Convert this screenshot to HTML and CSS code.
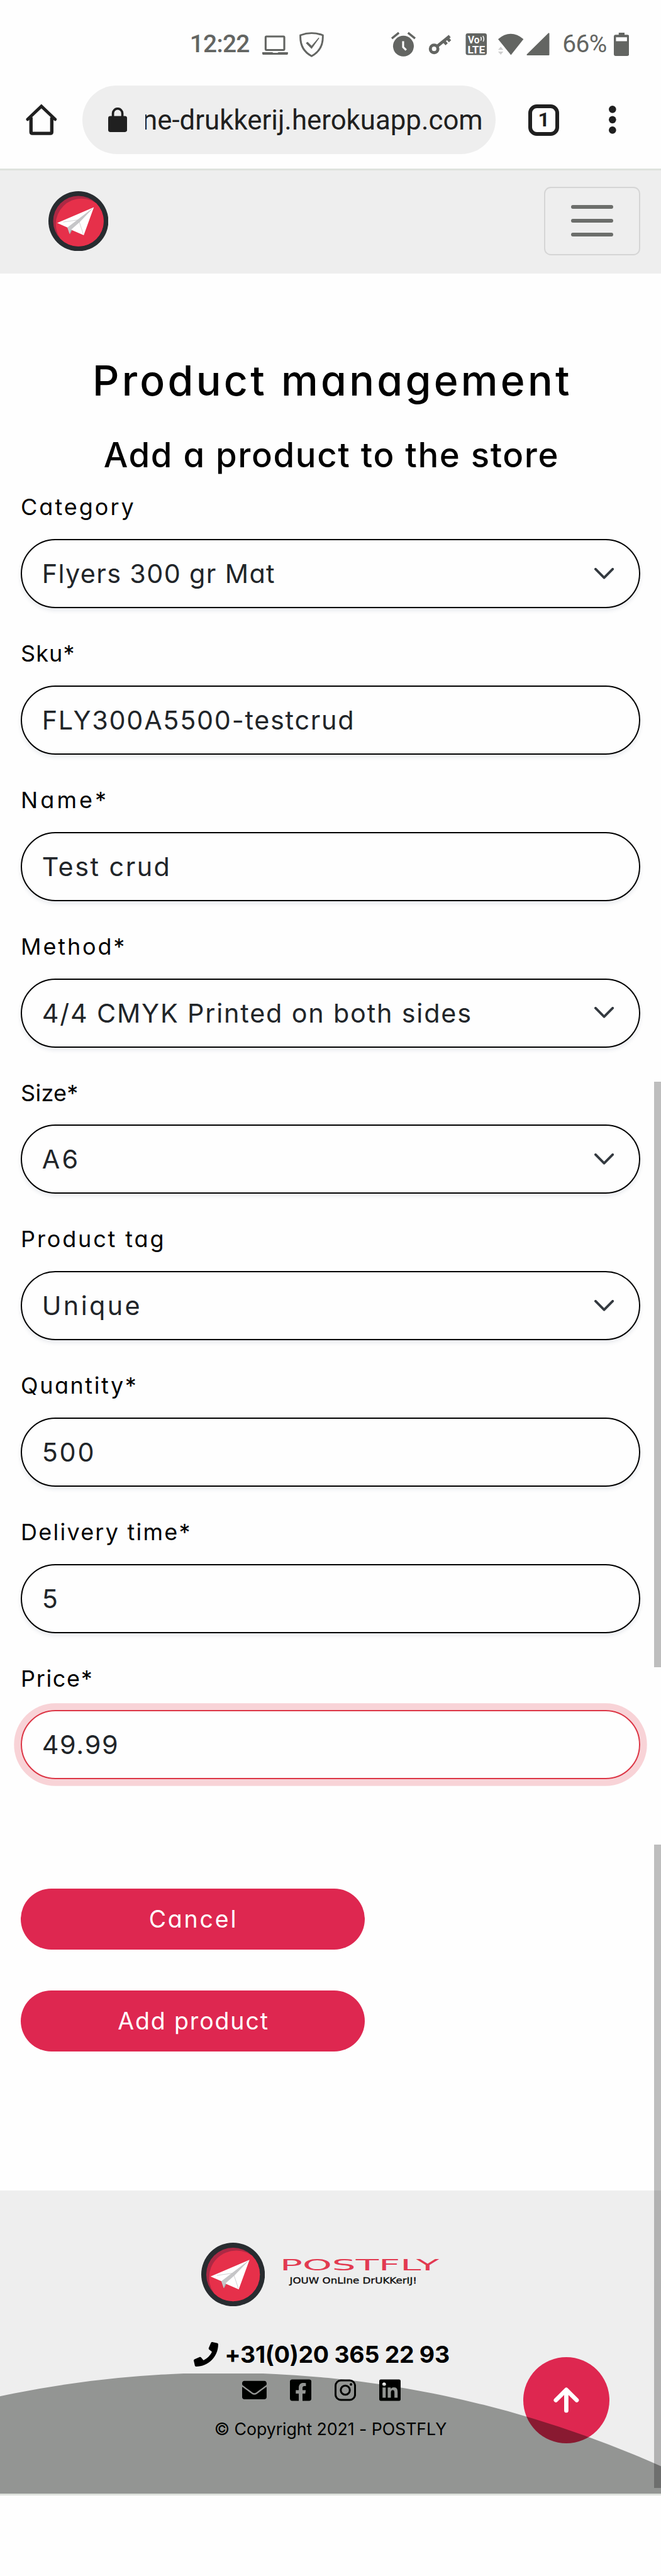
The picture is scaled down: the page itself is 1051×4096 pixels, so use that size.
FILE: index.html
```html
<!DOCTYPE html>
<html lang="en">
<head>
<meta charset="utf-8">
<title>Product management</title>
<link rel="stylesheet" href="styles.css">
</head>
<body>
<div class="screen">
  <div class="status">
    <span class="clock">12:22</span>
    <svg class="i-laptop" width="42" height="44" viewBox="0 0 42 44"><rect x="5.500" y="9.300" width="30.500" height="22" rx="1.500" fill="none" stroke="#636562" stroke-width="3.200"/><path d="M0 35h16.500l1.500 1h7l1.500-1H42v2.500q0 1.500-1.500 1.500h-39Q0 39 0 37.500z"/></svg>
    <svg class="i-shield" width="40" height="44" viewBox="0 0 40 44"><path d="M20 3.700Q29 3.700 38.300 7.200Q39.500 31 20 41.300Q.5 31 1.700 7.200Q11 3.700 20 3.700z" fill="none" stroke="#636562" stroke-width="3"/><path d="M10.500 20l3-2 6.500 6.500L31.500 11l1 1L20 29.500z"/></svg>
    <svg class="i-alarm" width="40" height="44" viewBox="0 0 40 44"><circle cx="20" cy="25" r="17"/><path d="M1 12.500L12.500 3.200M39 12.500L27.500 3.200" stroke="#636562" stroke-width="3.500"/><path d="M19.500 17v9.500l5 5" fill="none" stroke="#fefefe" stroke-width="3.200"/></svg>
    <svg class="i-key" width="40" height="44" viewBox="0 0 40 44"><circle cx="9.500" cy="29.500" r="6.200" fill="none" stroke="#636562" stroke-width="5"/><path d="M13.500 26L35 8.500M31 12l4.500 5M25.500 17l4.500 5" stroke="#636562" stroke-width="5" fill="none"/></svg>
    <svg class="i-volte" width="36" height="44" viewBox="0 0 36 44"><rect x=".5" y="4" width="34.500" height="35.500" rx="3.500"/><text x="4" y="20.500" class="volte" textLength="19" lengthAdjust="spacingAndGlyphs">Vo</text><text x="3.500" y="36.500" class="volte" textLength="28.500" lengthAdjust="spacingAndGlyphs">LTE</text><path d="M25 10q2 3 0 6M28.500 8.500q3 4.500 .5 9" fill="none" stroke="#fefefe" stroke-width="1.500"/></svg>
    <svg class="i-wifi" width="43" height="44" viewBox="0 0 43 44"><path d="M1 13.500Q21.500-3.500 42.500 13.500L22 39.500z"/><path d="M1 31l4.300-5L9.600 31zM1 34h8.600l-4.300 5z" fill="#cfcfcf"/></svg>
    <svg class="i-signal" width="39" height="44" viewBox="0 0 39 44"><path d="M1.500 39L36.500 4.500V39z" stroke="#636562" stroke-width="2" stroke-linejoin="round"/></svg>
    <span class="level">66%</span>
    <svg class="i-battery" width="25" height="44" viewBox="0 0 25 44"><path d="M8 3h9.500v3.500H22q3 0 3 3V38q0 3-3 3H3q-3 0-3-3V9.500q0-3 3-3h5zM3.500 10.500v6.500h18v-6.500z" fill-rule="evenodd"/></svg>
  </div>
  <div class="toolbar">
    <svg class="i-home" width="52" height="52" viewBox="0 0 52 52" fill="none" stroke="#202020"><path d="M8.500 22v24q0 2.500 2.500 2.500h29q2.500 0 2.500-2.500V22" stroke-width="5.500"/><path d="M3 25.500L25.500 4 48 25.500" stroke-width="5" stroke-linecap="round"/></svg>
    <div class="omnibox">
      <svg class="i-lock" width="31" height="40" viewBox="0 0 31 40"><rect y="14" width="31" height="26" rx="3.500" fill="#202020"/><path d="M7.800 15V9.500a7.700 7.700 0 0 1 15.400 0V15" fill="none" stroke="#202020" stroke-width="3.800"/></svg>
      <div class="url"><span>ne-drukkerij.herokuapp.com</span></div>
    </div>
    <div class="tabs">1</div>
    <svg class="i-more" width="12" height="48" viewBox="0 0 12 48"><circle cx="6" cy="7" r="6"/><circle cx="6" cy="24" r="6"/><circle cx="6" cy="41" r="6"/></svg>
  </div>
  <nav class="navbar">
    <svg class="mark" viewBox="0 0 98 98"><defs><clipPath id="disc"><circle cx="49" cy="49" r="41.300"/></clipPath><g id="plane"><circle cx="49" cy="49" r="49" fill="#282c30"/><circle cx="49" cy="49" r="41.300" fill="#ac2944"/><circle cx="54" cy="54" r="42" fill="#e6304a" clip-path="url(#disc)"/><path d="M31 59.300l4 11L39 63z" fill="#a3a3a5"/><path d="M74.300 26.300L14.300 52 31 59.300 38.700 63.700 57.700 72z" fill="#fff"/><path d="M74.300 26.300L47 47 31 59.300 34.500 70 37 63 51 50.500z" fill="#c6c6c8"/><path d="M24 50.500l24-3.500M50.500 50.500L57 70" fill="none" stroke="#c6c6c8" stroke-width=".8"/></g></defs><use href="#plane"/></svg>
    <div class="toggler"><i></i><i></i><i></i></div>
  </nav>
  <main class="content">
    <h1>Product management</h1>
    <h2>Add a product to the store</h2>
    <form class="fields">
      <div class="field f-category"><label>Category</label><div class="control"><span>Flyers 300 gr Mat</span><svg class="chev" viewBox="0 0 32 19"><path d="M2 2l14 14L30 2"/></svg></div></div>
      <div class="field f-sku"><label>Sku*</label><div class="control"><span>FLY300A5500-testcrud</span></div></div>
      <div class="field f-name"><label>Name*</label><div class="control"><span>Test crud</span></div></div>
      <div class="field f-method"><label>Method*</label><div class="control"><span>4/4 CMYK Printed on both sides</span><svg class="chev" viewBox="0 0 32 19"><path d="M2 2l14 14L30 2"/></svg></div></div>
      <div class="field f-size"><label>Size*</label><div class="control"><span>A6</span><svg class="chev" viewBox="0 0 32 19"><path d="M2 2l14 14L30 2"/></svg></div></div>
      <div class="field f-tag"><label>Product tag</label><div class="control"><span>Unique</span><svg class="chev" viewBox="0 0 32 19"><path d="M2 2l14 14L30 2"/></svg></div></div>
      <div class="field f-quantity"><label>Quantity*</label><div class="control"><span>500</span></div></div>
      <div class="field f-delivery"><label>Delivery time*</label><div class="control"><span>5</span></div></div>
      <div class="field f-price"><label>Price*</label><div class="control focused"><span>49.99</span></div></div>
    </form>
    <div class="actions">
      <div class="btn cancel">Cancel</div>
      <div class="btn add">Add product</div>
    </div>
  </main>
  <footer class="footer">
    <div class="brand">
      <svg class="mark" viewBox="0 0 98 98"><use href="#plane"/></svg>
      <svg class="wordmark" width="262" height="104" viewBox="0 0 262 104"><text class="name" x="-1" y="45" textLength="260" lengthAdjust="spacingAndGlyphs">POSTFLY</text><text class="tagline" x="15" y="67" textLength="208" lengthAdjust="spacingAndGlyphs">JOUW OnLIne DrUKKerIJ!</text></svg>
    </div>
    <div class="phone"><svg width="40" height="40" viewBox="0 0 512 512"><path d="M493.400 24.600l-104-24c-11.300-2.600-22.900 3.300-27.500 13.900l-48 112c-4.200 9.800-1.400 21.300 6.900 28l60.600 49.600c-36 76.700-98.900 140.500-177.200 177.200l-49.600-60.600c-6.800-8.300-18.200-11.100-28-6.900l-112 48C3.900 366.500-2 378.100.6 389.400l24 104C27.100 504.200 36.700 512 48 512c256.100 0 464-207.500 464-464 0-11.200-7.700-20.900-18.600-23.400z"/></svg><span>+31(0)20 365 22 93</span></div>
    <div class="social">
      <svg width="40" height="40" viewBox="0 0 512 512"><path d="M502.300 190.800c3.900-3.100 9.700-.2 9.700 4.700V400c0 26.500-21.500 48-48 48H48c-26.500 0-48-21.500-48-48V195.600c0-5 5.700-7.800 9.700-4.700 22.400 17.400 52.100 39.500 154.100 113.600 21.100 15.400 56.700 47.800 92.200 47.600 35.700.3 72-32.800 92.300-47.600 102-74.100 131.600-96.300 154-113.700zM256 320c23.200.4 56.600-29.200 73.400-41.400 132.700-96.300 142.800-104.700 173.400-128.700 5.800-4.500 9.200-11.500 9.200-18.900v-19c0-26.500-21.500-48-48-48H48c-26.500 0-48 21.500-48 48v19c0 7.400 3.400 14.300 9.200 18.900 30.600 23.900 40.700 32.400 173.400 128.700 16.800 12.200 50.200 41.800 73.400 41.400z"/></svg>
      <svg width="35" height="40" viewBox="0 0 448 512"><path d="M400 32H48A48 48 0 0 0 0 80v352a48 48 0 0 0 48 48h137.250V327.690h-63V256h63v-54.640c0-62.150 37-96.480 93.670-96.480 27.140 0 55.520 4.840 55.520 4.840v61h-31.270c-30.810 0-40.420 19.120-40.420 38.730V256h68.780l-11 71.690h-57.780V480H400a48 48 0 0 0 48-48V80a48 48 0 0 0-48-48z"/></svg>
      <svg width="35" height="40" viewBox="0 0 448 512"><rect x="20" y="52" width="408" height="408" rx="112" fill="none" stroke="#000" stroke-width="40"/><circle cx="224" cy="256" r="95" fill="none" stroke="#000" stroke-width="40"/><circle cx="343" cy="137" r="27"/></svg>
      <svg width="35" height="40" viewBox="0 0 448 512"><path d="M416 32H31.900C14.300 32 0 46.500 0 64.300v383.400C0 465.500 14.300 480 31.900 480H416c17.600 0 32-14.500 32-32.300V64.300c0-17.800-14.400-32.300-32-32.300zM135.400 416H69V202.200h66.500V416zm-33.200-243c-21.300 0-38.500-17.300-38.500-38.500S80.900 96 102.200 96c21.200 0 38.500 17.300 38.500 38.500 0 21.300-17.200 38.500-38.500 38.500zm282.100 243h-66.400V312c0-24.800-.5-56.700-34.500-56.700-34.600 0-39.900 27-39.900 54.900V416h-66.400V202.200h63.700v29.200h.9c8.900-16.800 30.600-34.500 62.900-34.500 67.200 0 79.700 44.300 79.700 101.900V416z"/></svg>
    </div>
    <p class="copyright">© Copyright 2021 - POSTFLY</p>
    <div class="fab"><svg width="42" height="42" viewBox="0 0 42 42"><path d="M21 38V5M4 21L21 4l17 17" fill="none" stroke="#fff" stroke-width="7" stroke-linecap="round" stroke-linejoin="round"/></svg></div>
    <svg class="ripple" width="1080" height="196" viewBox="0 0 1080 196"><circle cx="365" cy="1748.800" r="1750" fill="rgba(0,5,0,.38)"/></svg>
  </footer>
  <div class="systembar"></div>
  <div class="scroll scroll-upper"></div>
  <div class="scroll scroll-lower"></div>
</div>
</body>
</html>
```
FILE: styles.css
```css
* { box-sizing: border-box; }
body { margin: 0; background: #fefefe; }
.screen {
  position: relative; width: 1080px; height: 4209px; overflow: hidden;
  zoom: 0.97315; background: #fefefe; color: #000;
  font-family: Inter, "Open Sans", sans-serif; font-feature-settings: "cv11";
}
svg { display: block; flex: none; }
h1, h2, p { margin: 0; font-weight: 500; }

/* Android status bar */
.status { display: flex; height: 140px; padding: 50px 0 0 310px; fill: #636562; color: #636562; font: 500 40px/44px Roboto, sans-serif; }
.clock { width: 119px; letter-spacing: -.78px; }
.i-shield { margin-left: 18px; }
.i-alarm { margin-left: 110px; }
.i-key { margin-left: 21px; }
.i-volte { margin-left: 20px; }
.i-wifi { margin-left: 17px; }
.i-signal { margin-left: 4px; }
.level { width: 84px; margin-left: 20px; font-weight: 400; letter-spacing: -.57px; }
.volte { font: 700 17px Roboto, sans-serif; letter-spacing: 0; fill: #fefefe; }

/* Browser toolbar */
.toolbar { display: flex; align-items: center; height: 138px; padding: 0 0 23px 42px; border-bottom: 3.100px solid #dee2dd; }
.omnibox { display: flex; align-items: center; width: 675px; height: 112px; margin-left: 41px; padding-left: 42px; border-radius: 56px; background: #eee; }
.url { display: flex; justify-content: flex-end; width: 552px; margin-left: 29px; overflow: hidden; color: #202020; font: 400 45px/60px Roboto, sans-serif; white-space: nowrap; }
.tabs { display: flex; align-items: center; justify-content: center; width: 51px; height: 51px; margin-left: 53px; border: 6.200px solid #202020; border-radius: 14px; color: #202020; font: 700 33px/36px Roboto, sans-serif; }
.i-more { margin-left: 81px; fill: #202020; }

/* Site navbar */
.navbar { display: flex; align-items: flex-start; justify-content: space-between; height: 169px; padding: 27px 34px 0 79px; background: #eee; }
.navbar .mark { width: 98px; height: 98px; margin-top: 7px; }
.toggler { display: flex; flex-direction: column; align-items: center; justify-content: center; gap: 16.500px; width: 157px; height: 112px; border: 2.200px solid #d5d5d5; border-radius: 11px; }
.toggler i { width: 68px; height: 6px; border-radius: 3px; background: #6c6e6b; }

/* Product form */
.content { height: 3132.500px; padding: 136px 34px 0; }
h1 { padding-left: 6px; font-size: 68px; line-height: 80px; letter-spacing: 4.400px; text-align: center; white-space: nowrap; }
h2 { margin-top: 47px; padding-left: 3px; font-size: 56px; line-height: 66px; letter-spacing: 1.700px; text-align: center; white-space: nowrap; }
.fields { display: flex; flex-direction: column; gap: 45.200px; margin-top: 24px; }
.field { height: 194px; }
label { display: table; margin-bottom: 23px; font-size: 37px; line-height: 58px; white-space: nowrap; }
.control { display: flex; align-items: center; justify-content: space-between; height: 113px; padding: 0 41px 0 32.500px; border: 2.200px solid #000; border-radius: 57px; box-shadow: 0 4px 7px rgba(40, 60, 100, .1); color: #212529; font-size: 42.500px; white-space: nowrap; }
.focused { border-color: #dc3545; box-shadow: 0 0 0 11px #f8d3d7; }
.chev { width: 32px; height: 19px; fill: none; stroke: #343a40; stroke-width: 4; stroke-linecap: round; stroke-linejoin: round; }

/* Tracking tuned per caption and value */
.f-category label { letter-spacing: 3.070px; }
.f-category span { letter-spacing: 1.390px; }
.f-sku label { letter-spacing: 1.090px; }
.f-sku span { letter-spacing: 1.760px; }
.f-name label { letter-spacing: 4.200px; }
.f-name span { letter-spacing: 2.530px; }
.f-method label { letter-spacing: 2.920px; }
.f-method span { letter-spacing: 1.860px; }
.f-size label { letter-spacing: .260px; }
.f-size span { letter-spacing: 3.310px; }
.f-tag label { letter-spacing: 2.930px; }
.f-tag span { letter-spacing: 3.460px; }
.f-quantity label { letter-spacing: 2.610px; }
.f-quantity span { letter-spacing: 2.850px; }
.f-delivery label { letter-spacing: 2.290px; }
.f-price label { letter-spacing: 1.700px; }
.f-price span { letter-spacing: 1.730px; }

.actions { display: flex; flex-direction: column; gap: 67px; margin-top: 178.500px; }
.btn { display: flex; align-items: center; justify-content: center; width: 562px; height: 99.500px; padding-left: 2px; border-radius: 50px; background: #de2750; color: #fff; font-size: 38.500px; }
.cancel { letter-spacing: 2.910px; }
.add { letter-spacing: 1.950px; }

/* Footer */
.footer { position: relative; height: 495px; padding-top: 84.500px; overflow: hidden; background: #eee; }
.brand { display: flex; padding-left: 329px; }
.brand .mark { width: 104px; height: 104px; }
.wordmark { margin-left: 25px; }
.name { font: 400 26px "DejaVu Sans", sans-serif; fill: #e23a50; }
.tagline { font: 400 14.500px "DejaVu Sans", sans-serif; fill: #111; stroke: #111; stroke-width: .4; }
.phone { display: flex; align-items: center; height: 58px; margin-top: 50px; padding-left: 317px; font-size: 38.500px; font-weight: 700; letter-spacing: -.280px; white-space: nowrap; }
.phone span { margin-left: 10px; }
.social { display: flex; gap: 38px; margin-top: 9px; padding-left: 396px; }
.copyright { margin-top: 23px; font-size: 27.500px; font-weight: 400; line-height: 42px; letter-spacing: -.090px; text-align: center; white-space: nowrap; }
.fab { position: absolute; left: 855px; top: 271.500px; display: flex; align-items: center; justify-content: center; width: 141px; height: 141px; border-radius: 50%; background: #de2750; }
.ripple { position: absolute; left: 0; bottom: 0; }
.systembar { height: 3px; background: #dee2dd; }
.scroll { position: absolute; right: 0; width: 11px; background: rgba(0, 0, 0, .25); }
.scroll-upper { top: 1767px; height: 957px; }
.scroll-lower { top: 3014px; height: 1051px; }
```
